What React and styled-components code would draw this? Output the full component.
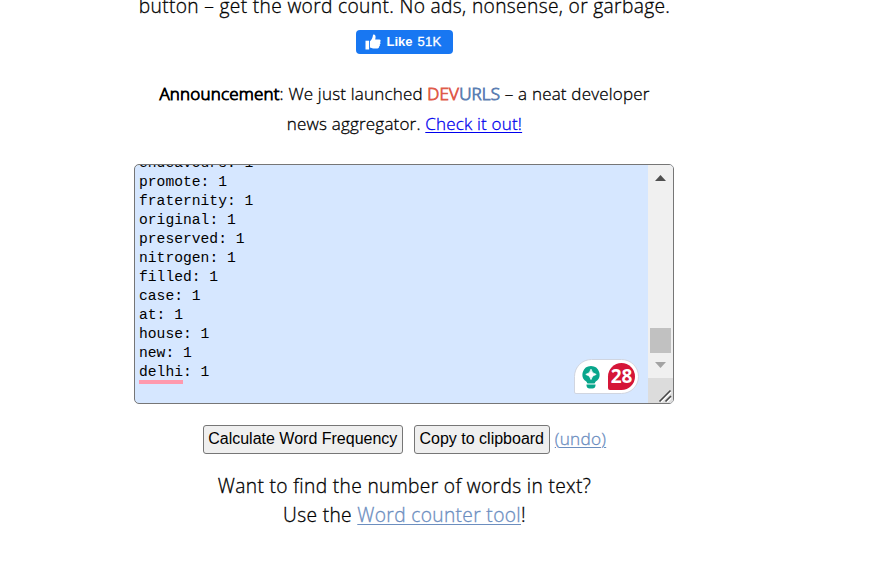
import React from 'react';
import styled, { createGlobalStyle } from 'styled-components';

const GlobalStyle = createGlobalStyle`
  * { box-sizing: border-box; }
  body { margin: 0; background: #fff; overflow: hidden; }
`;

const Page = styled.main`
  display: flex;
  flex-direction: column;
  align-items: center;
  width: 540px;
  height: 570px;
  margin-left: 134px;
  overflow: hidden;
  color: #000;
  font: 300 19.2px/29px "Open Sans", sans-serif;
  letter-spacing: 0.34px;
  -webkit-text-stroke: 0.3px currentColor;
  text-align: center;
  white-space: nowrap;
`;

const Intro = styled.p`
  margin: -9px 0 0 1px;
  height: 39px;
  line-height: 29px;
`;

const LikeButton = styled.div`
  display: flex;
  align-items: center;
  width: 97px;
  height: 24px;
  padding-left: 9px;
  border-radius: 4px;
  background: #1877f2;
  color: #fff;
  font: bold 13px/24px "Liberation Sans", Arial, sans-serif;
  letter-spacing: 0;
  -webkit-text-stroke: 0;
  gap: 6px;

  svg { display: block; }
`;

const LikeCount = styled.span`
  font-weight: 400;
  margin-left: -1px;
  letter-spacing: 0.2px;
  -webkit-text-stroke: 0.3px currentColor;
`;

const Announcement = styled.p`
  margin: 25px 0 0 1px;
  font-size: 17px;
  line-height: 30px;
  letter-spacing: 0.19px;
`;

const Strong = styled.span`
  color: ${(p) => p.$color || '#000'};
  -webkit-text-stroke: 0.9px currentColor;
`;

const Link = styled.a`
  color: ${(p) => p.$color || '#6c8ebf'};
  text-decoration: underline;
  text-decoration-thickness: 1px;
  text-underline-offset: 2px;
`;

const UndoLink = styled(Link)`
  margin-top: -3px;
  font-size: 17.2px;
  letter-spacing: 0.25px;
`;

const Editor = styled.div`
  position: relative;
  display: flex;
  flex: none;
  width: 540px;
  height: 240px;
  margin-top: 25px;
  border: 1px solid #767676;
  border-radius: 5px;
  background: #d6e7ff;
  letter-spacing: 0;
  -webkit-text-stroke: 0;
  overflow: hidden;
`;

const Lines = styled.div`
  flex: 1;
  margin-top: -11px;
  padding-left: 4px;
  text-align: left;
  font: 400 14.66px/19px "Liberation Mono", Consolas, monospace;
`;

const Line = styled.div`
  height: 19px;
`;

const Misspelled = styled.span`
  display: inline-block;
  height: 21px;
  border-bottom: 4px solid #ff99ad;
`;

const Scrollbar = styled.div`
  display: flex;
  flex-direction: column;
  width: 25px;
  background: #f0f0f0;

  svg { display: block; flex: none; }
`;

const Thumb = styled.div`
  width: 21px;
  height: 25px;
  margin: 139px 0 0 2px;
  background: #c1c1c1;
`;

const Resizer = styled.div`
  height: 25px;
  margin-top: auto;
  background: #dcdcdc;
`;

const Checker = styled.div`
  position: absolute;
  left: 439px;
  top: 194px;
  display: flex;
  align-items: center;
  gap: 7px;
  width: 65px;
  height: 35px;
  padding-left: 7px;
  border: 1px solid #d0d5e0;
  border-radius: 18px 18px 18px 2px;
  background: #fff;
`;

const IssueCount = styled.span`
  width: 27px;
  height: 27px;
  margin-left: 1px;
  border-radius: 14px 14px 14px 2px;
  background: #d51638;
  color: #fff;
  font: 700 19px/27px "Open Sans", sans-serif;
`;

const Actions = styled.div`
  display: flex;
  align-items: center;
  flex: none;
  height: 29px;
  margin: 21px 0 0 1px;
`;

const Button = styled.button`
  width: ${(p) => p.$width}px;
  height: 29px;
  margin: 0 ${(p) => p.$gap}px 0 0;
  padding: 0 0 2px;
  border: 1px solid #767676;
  border-radius: 3px;
  background: #efefef;
  color: #000;
  font: 16px/25px "Liberation Sans", Arial, sans-serif;
  -webkit-text-stroke: 0;
  white-space: nowrap;
`;

const Footer = styled.p`
  margin: 17px 0 0 1px;
`;

const words = ['endeavours', 'promote', 'fraternity', 'original', 'preserved', 'nitrogen', 'filled', 'case', 'at', 'house', 'new'];

const ThumbsUp = () => (
  <svg width="16" height="16" viewBox="0 0 16 16" fill="#fff">
    <path d="M.5 6.7h3.6v8.8H.5z" />
    <path d="M5 7.2C6.8 5.5 7.7 3.8 7.9 1.5 8 .5 8.5.4 9 .5c1.6.4 2 2.2 1.2 5h4c1.8 0 1.8 2.1.8 2.6.9.8.6 2-.3 2.3.5.9.1 1.8-.7 2.1.3 1.1-.4 1.9-1.6 1.9H8.2c-1.4 0-2.1-.7-3.2-.9z" />
  </svg>
);

const Bulb = () => (
  <svg width="18" height="24" viewBox="0 0 18 24">
    <path fill="#08a68b" d="M9 1a8.5 8.5 0 0 0-4.7 15.6L5.5 18.4h7l1.2-1.8A8.5 8.5 0 0 0 9 1zM4.5 19.4h9v1q-.3 3-3 3h-3q-2.7 0-3-3z" />
    <path fill="#fff" d="M9 4.2Q9.8 8.6 14.2 9.4 9.8 10.2 9 14.6 8.2 10.2 3.8 9.4 8.2 8.6 9 4.2z" stroke="#fff" strokeWidth=".8" />
  </svg>
);

export default function App() {
  return (
    <>
      <GlobalStyle />
      <Page>
        <Intro>button – get the word count. No ads, nonsense, or garbage.</Intro>
        <LikeButton>
          <ThumbsUp />
          <span>Like</span>
          <LikeCount>51K</LikeCount>
        </LikeButton>
        <Announcement>
          <Strong>Announcement</Strong>: We just launched <Strong $color="#df5c4b">DEV</Strong>
          <Strong $color="#5d7fb3">URLS</Strong> – a neat developer
          <br />
          news aggregator. <Link $color="#0000ee">Check it out!</Link>
        </Announcement>
        <Editor>
          <Lines>
            {words.map((word) => <Line key={word}>{word}: 1</Line>)}
            <Line><Misspelled>delhi</Misspelled>: 1</Line>
          </Lines>
          <Scrollbar>
            <svg width="25" height="24" viewBox="0 0 25 24"><path d="M7 16l5.5-6 5.5 6z" fill="#505050" /></svg>
            <Thumb />
            <svg width="25" height="22" viewBox="0 0 25 22"><path d="M7 9l5.5 6L18 9z" fill="#a3a3a3" /></svg>
            <Resizer>
              <svg width="25" height="25" viewBox="0 0 25 25">
                <path d="M13 24l10-10M19 24l4-4" stroke="#fff" strokeWidth="1.6" />
                <path d="M11.5 23.5l11-11M17.5 23.5l5.5-5.5" stroke="#484848" strokeWidth="1.6" />
              </svg>
            </Resizer>
          </Scrollbar>
          <Checker>
            <Bulb />
            <IssueCount>28</IssueCount>
          </Checker>
        </Editor>
        <Actions>
          <Button $width={200} $gap={11}>Calculate Word Frequency</Button>
          <Button $width={136} $gap={5}>Copy to clipboard</Button>
          <UndoLink>(undo)</UndoLink>
        </Actions>
        <Footer>
          Want to find the number of words in text?
          <br />
          Use the <Link>Word counter tool</Link>!
        </Footer>
      </Page>
    </>
  );
}
